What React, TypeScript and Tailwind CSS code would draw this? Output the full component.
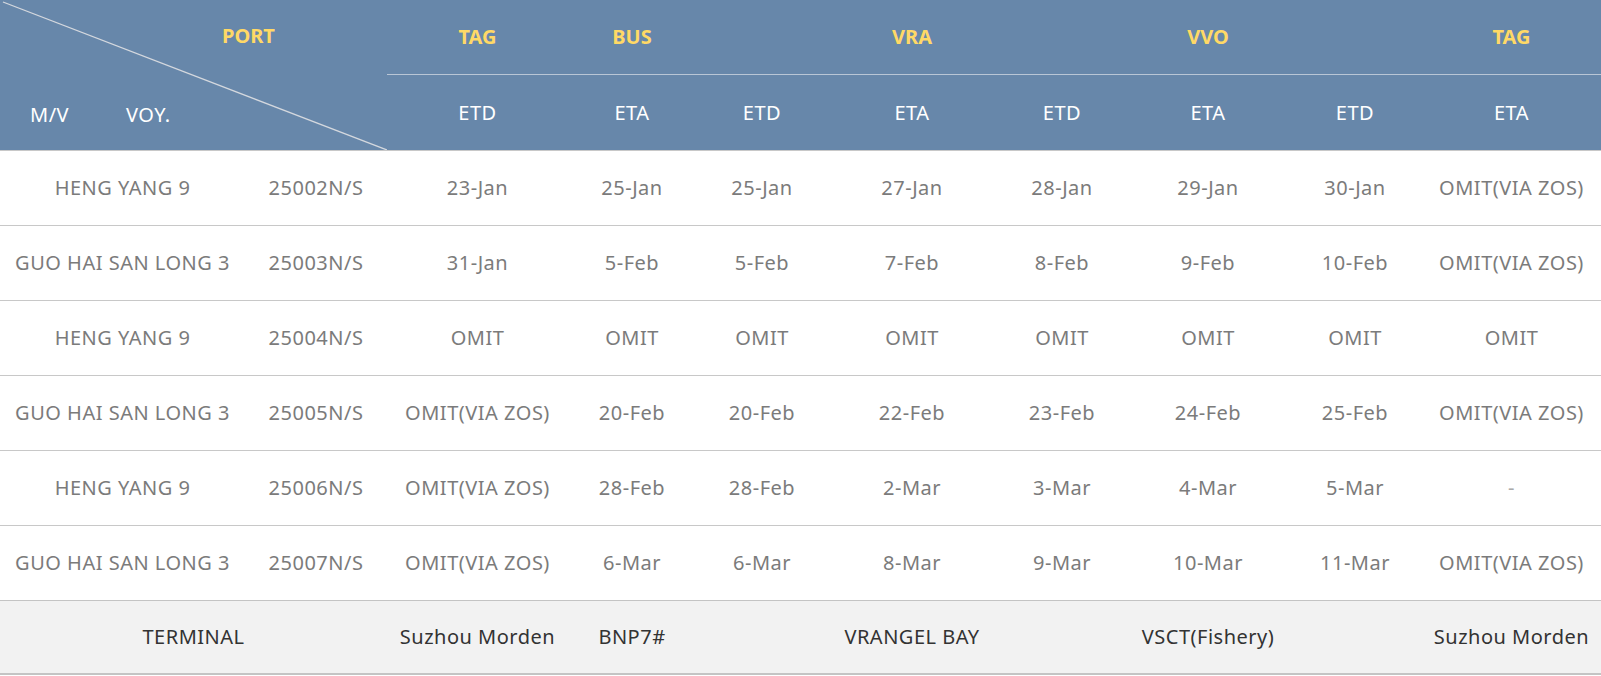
const cols =
  "grid grid-cols-[245px_142px_181px_128px_132px_168px_132px_160px_134px_179px]";

const ports = ["TAG", "BUS", "", "VRA", "", "VVO", "", "TAG"];
const kinds = ["ETD", "ETA", "ETD", "ETA", "ETD", "ETA", "ETD", "ETA"];

const rows = [
  ["HENG YANG 9", "25002N/S", "23-Jan", "25-Jan", "25-Jan", "27-Jan", "28-Jan", "29-Jan", "30-Jan", "OMIT(VIA ZOS)"],
  ["GUO HAI SAN LONG 3", "25003N/S", "31-Jan", "5-Feb", "5-Feb", "7-Feb", "8-Feb", "9-Feb", "10-Feb", "OMIT(VIA ZOS)"],
  ["HENG YANG 9", "25004N/S", "OMIT", "OMIT", "OMIT", "OMIT", "OMIT", "OMIT", "OMIT", "OMIT"],
  ["GUO HAI SAN LONG 3", "25005N/S", "OMIT(VIA ZOS)", "20-Feb", "20-Feb", "22-Feb", "23-Feb", "24-Feb", "25-Feb", "OMIT(VIA ZOS)"],
  ["HENG YANG 9", "25006N/S", "OMIT(VIA ZOS)", "28-Feb", "28-Feb", "2-Mar", "3-Mar", "4-Mar", "5-Mar", "-"],
  ["GUO HAI SAN LONG 3", "25007N/S", "OMIT(VIA ZOS)", "6-Mar", "6-Mar", "8-Mar", "9-Mar", "10-Mar", "11-Mar", "OMIT(VIA ZOS)"],
];

const terminals = ["Suzhou Morden", "BNP7#", "", "VRANGEL BAY", "", "VSCT(Fishery)", "", "Suzhou Morden"];

export default function App() {
  return (
    <div className="w-[1601px] bg-white font-['Noto_Sans','Open_Sans',sans-serif] text-[20px] tracking-[0.5px]">
      {/* header */}
      <div className={`${cols} h-[150px] grid-rows-[75px_75px] bg-[#6787aa]`}>
        <div className="relative col-span-2 row-span-2 flex flex-col">
          <svg className="absolute inset-0" width="387" height="150">
            <line x1="3" y1="2" x2="387" y2="150" stroke="#d4d8de" strokeWidth="1.3" />
          </svg>
          <div className="flex h-[75px] items-center pl-[222px] pb-[4px] font-bold tracking-normal text-[#ffd966]">PORT</div>
          <div className="flex h-[75px] items-center pt-[4px] text-white">
            <span className="w-[126px] pl-[30px]">M/V</span>
            <span>VOY.</span>
          </div>
        </div>
        {ports.map((p, i) => (
          <div
            key={"p" + i}
            className="flex items-center justify-center border-b border-[#b9c6d6] font-bold tracking-normal text-[#ffd966]"
          >
            {p}
          </div>
        ))}
        {kinds.map((k, i) => (
          <div key={"k" + i} className="flex items-center justify-center text-white">
            {k}
          </div>
        ))}
      </div>

      {/* rows */}
      {rows.map((r, ri) => (
        <div key={ri} className={`${cols} h-[75px] border-t border-[#c8c8c8] text-[#7b7b7b]`}>
          {r.map((c, ci) => (
            <div
              key={ci}
              className={`flex items-center justify-center whitespace-nowrap ${c === "-" ? "text-[#aaaaaa]" : ""}`}
            >
              {c}
            </div>
          ))}
        </div>
      ))}

      {/* terminal */}
      <div className={`${cols} h-[75px] border-t border-b-2 border-[#c4c4c4] bg-[#f2f2f2] text-[#333333]`}>
        <div className="col-span-2 flex items-center justify-center">TERMINAL</div>
        {terminals.map((t, i) => (
          <div key={"t" + i} className="flex items-center justify-center whitespace-nowrap">
            {t}
          </div>
        ))}
      </div>
    </div>
  );
}
